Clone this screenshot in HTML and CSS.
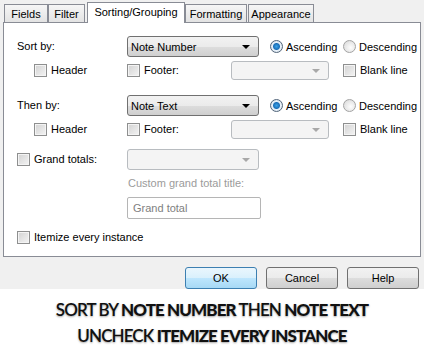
FILE: index.html
```html
<!DOCTYPE html>
<html lang="en">
<head>
  <meta charset="UTF-8">
  <link rel="stylesheet" href="styles.css">
  <title>Sorting/Grouping</title>
</head>
<body>

<div class="dialog">
  <div class="tabs">
    <div class="tab tab-fields">Fields</div>
    <div class="tab tab-filter">Filter</div>
    <div class="tab tab-active">Sorting/Grouping</div>
    <div class="tab tab-format">Formatting</div>
    <div class="tab tab-appear">Appearance</div>
  </div>

  <div class="panel">
    <div class="row">
      <div class="label">Sort by:</div>
      <div class="select">Note Number<span class="arrow"></span></div>
      <div class="radio-asc"><span class="radio checked"></span>Ascending</div>
      <div><span class="radio"></span>Descending</div>
    </div>
    <div class="row sub">
      <div class="sub-header"><span class="check"></span>Header</div>
      <div class="sub-footer"><span class="check"></span>Footer:</div>
      <div class="select disabled small"><span class="arrow"></span></div>
      <div class="blank"><span class="check"></span>Blank line</div>
    </div>

    <div class="row then">
      <div class="label">Then by:</div>
      <div class="select">Note Text<span class="arrow"></span></div>
      <div class="radio-asc"><span class="radio checked"></span>Ascending</div>
      <div><span class="radio"></span>Descending</div>
    </div>
    <div class="row sub">
      <div class="sub-header"><span class="check"></span>Header</div>
      <div class="sub-footer"><span class="check"></span>Footer:</div>
      <div class="select disabled small"><span class="arrow"></span></div>
      <div class="blank"><span class="check"></span>Blank line</div>
    </div>

    <div class="row grand">
      <div class="grand-label"><span class="check"></span>Grand totals:</div>
      <div class="select disabled"><span class="arrow"></span></div>
    </div>
    <div class="custom-label">Custom grand total title:</div>
    <div class="input">Grand total</div>

    <div class="row itemize">
      <div><span class="check"></span>Itemize every instance</div>
    </div>
  </div>

  <div class="buttons">
    <button class="btn default">OK</button>
    <button class="btn">Cancel</button>
    <button class="btn">Help</button>
  </div>
</div>

<div class="caption">
  <p>Sort by <b>Note Number</b> then <b>Note Text</b></p>
  <p>Uncheck <b>Itemize every instance</b></p>
</div>

</body>
</html>
```

FILE: styles.css
```css
body {
  margin: 0;
  font-family: "Liberation Sans", Arial, sans-serif;
  font-size: 11px;
  color: #000;
  background: #fff;
}

.dialog {
  background: #f0f0f0;
  height: 289px;
  padding: 2px 3px 0;
  box-sizing: border-box;
}

/* tabs */
.tabs {
  display: flex;
  align-items: flex-end;
  height: 20px;
  padding-left: 1px;
}

.tab {
  height: 18px;
  line-height: 18px;
  box-sizing: border-box;
  border: 1px solid #898c95;
  border-bottom: none;
  background: linear-gradient(#f6f6f6, #e3e3e3);
  text-align: center;
}

.tab-fields { width: 44px; }
.tab-filter { width: 37px; }
.tab-format { width: 62px; }
.tab-appear { width: 66px; margin-left: 1px; }

.tab-active {
  width: 98px;
  height: 21px;
  line-height: 18px;
  margin: 0 0 -1px 2px;
  background: #fff;
  position: relative;
  z-index: 1;
}

.panel {
  height: 235px;
  box-sizing: border-box;
  border: 1px solid #898c95;
  background: #fff;
  padding: 11px 0 0 13px;
}

.row {
  display: flex;
  align-items: center;
  height: 24px;
}

.label { width: 110px; }

.select {
  position: relative;
  width: 132px;
  height: 21px;
  line-height: 20px;
  box-sizing: border-box;
  padding-left: 3px;
  border: 1px solid #707070;
  border-radius: 3px;
  background: linear-gradient(#f2f2f2 0%, #ebebeb 50%, #dddddd 51%, #cfcfcf 100%);
}

.select .arrow {
  position: absolute;
  right: 8px;
  top: 8px;
  border-left: 4px solid transparent;
  border-right: 4px solid transparent;
  border-top: 4px solid #000;
}

.select.disabled {
  border-color: #b8bcc0;
  background: #f4f4f4;
}

.select.disabled .arrow {
  border-top-color: #a8a8a8;
}

.select.small {
  width: 98px;
  height: 19px;
}

.select.small .arrow { top: 7px; }

.radio-asc {
  margin-left: 11px;
  width: 73px;
}

.radio {
  display: inline-block;
  vertical-align: -2px;
  width: 11px;
  height: 11px;
  margin-right: 3px;
  border: 1px solid #a3a3a3;
  border-radius: 50%;
  background: radial-gradient(circle at 60% 60%, #fdfdfd, #d6d6d6);
}

.radio.checked {
  border-color: #52657a;
  background: radial-gradient(circle, #3aa3e8 0, #1c6fb8 3px, #e9f2fa 4px, #cfd8e2 100%);
}

.check {
  display: inline-block;
  vertical-align: -3px;
  width: 11px;
  height: 11px;
  margin-right: 4px;
  border: 1px solid #8e8f8f;
  background: linear-gradient(135deg, #d2d2d2, #f4f4f4);
  box-shadow: inset 0 0 0 1px #f4f4f4;
}

.sub .sub-header {
  margin-left: 17px;
  width: 93px;
}

.sub-footer { width: 104px; }

.blank { margin-left: 14px; }

.then { margin-top: 11px; }

.grand { margin-top: 6px; }

.grand-label { width: 110px; }

.custom-label {
  margin: 5px 0 0 111px;
  height: 14px;
  line-height: 14px;
  color: #9b9b9b;
}

.input {
  width: 134px;
  height: 22px;
  line-height: 20px;
  box-sizing: border-box;
  margin: 7px 0 0 110px;
  padding-left: 5px;
  border: 1px solid #b5b5b5;
  border-radius: 2px;
  color: #808080;
}

.itemize { margin-top: 6px; }

/* buttons */
.buttons {
  display: flex;
  justify-content: flex-end;
  gap: 9px;
  padding: 10px 2px 0 0;
}

.btn {
  width: 72px;
  height: 22px;
  font-family: inherit;
  font-size: 11px;
  border: 1px solid #707070;
  border-radius: 3px;
  background: linear-gradient(#f2f2f2 0%, #ebebeb 50%, #dddddd 51%, #cfcfcf 100%);
}

.btn.default {
  border-color: #3c7fb1;
  background: linear-gradient(#eaf6fd 0%, #d9f0fc 50%, #bee6fd 51%, #a7d9f5 100%);
}

/* caption */
.caption {
  text-align: center;
  font-family: Lato, "Open Sans", sans-serif;
  font-size: 17px;
  font-weight: 600;
  text-transform: uppercase;
  color: #111;
  text-shadow: 0 1px 2px rgba(0, 0, 0, 0.35);
  padding-top: 8px;
}

.caption p {
  margin: 0;
  line-height: 26px;
  letter-spacing: -0.9px;
}

.caption b { font-weight: 900; }
```
